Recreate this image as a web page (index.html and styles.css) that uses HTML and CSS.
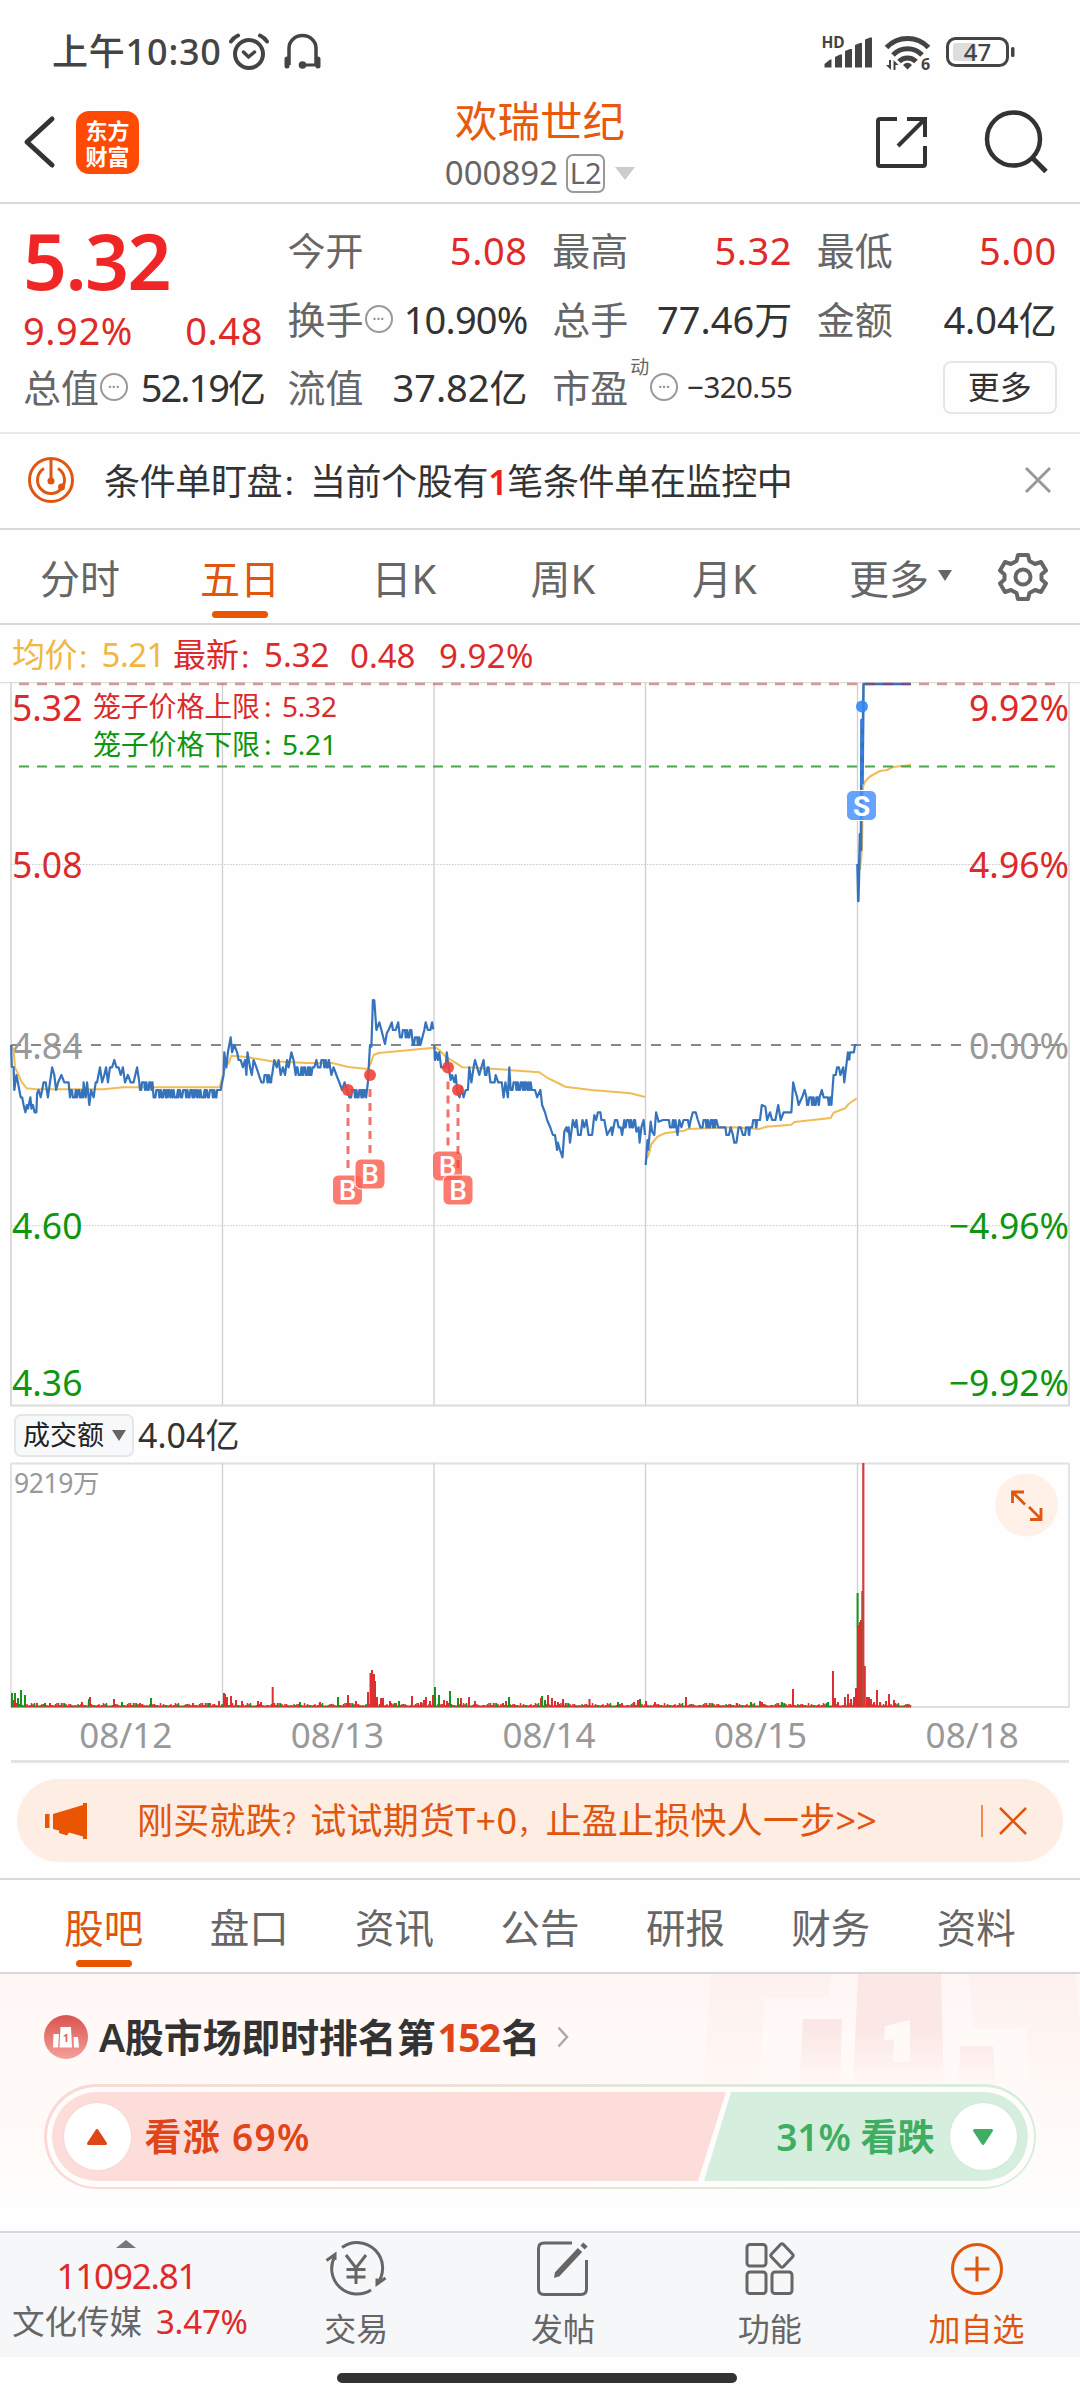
FILE: index.html
```html
<!DOCTYPE html>
<html lang="zh-CN">
<head>
<meta charset="utf-8">
<title>欢瑞世纪 000892</title>
<link rel="stylesheet" href="styles.css">
</head>
<body>
<div class="status">
  <div class="status-left">
    <span class="clock">上午10:30</span>
    <svg width="40" height="38" viewBox="0 0 40 38" fill="none" stroke="#444" stroke-linecap="round"><circle cx="20" cy="21" r="14" stroke-width="4"/><path d="M14.500 19l5 5 6-5" stroke-width="3.500"/><path d="M2 8.500Q4.500 4.500 9 2.500M31 2.500Q35.500 4.500 38 8.500" stroke-width="4"/></svg>
    <svg class="phones" width="40" height="38" viewBox="0 0 40 38" fill="none" stroke="#444"><path d="M6 32V15a13.500 12.500 0 0 1 27 0V32" stroke-width="3.500"/><path d="M4 26v7M35 26v7" stroke-width="5" stroke-linecap="round"/><path d="M19 32H33" stroke-width="3"/><circle cx="19.500" cy="32" r="3.800" fill="#444" stroke="none"/></svg>
  </div>
  <svg class="status-right" width="196" height="58" viewBox="820 23 196 58" fill="#444">
    <text x="821.500" y="48" font-size="15.500" font-weight="700">HD</text>
    <path d="M824.500 64l5.500-4.500h1.500V67.500h-7zM835 57l5-2.500h2V67.500h-7zM845 51l5-2h2V67.500h-7zM855 45l5-2h2V67.500h-7zM865 39.500l5-2h2V67.500h-7z"/>
    <g fill="none" stroke="#444" stroke-width="5"><path d="M886.500 47.500a29 29 0 0 1 42 0"/><path d="M893 55a20 20 0 0 1 29 0"/><path d="M899 61.500a12 12 0 0 1 17 0"/></g>
    <path d="M903 65q4.500-4.500 9 0l-4.500 4.500zM891 60v10l-5-5h3v-5zM893.500 70V60l5 5h-3v5z"/>
    <text x="921" y="70" font-size="16" font-weight="700">6</text>
    <rect x="953" y="43" width="23" height="18" rx="3" fill="#dedede"/>
    <rect x="947.500" y="38.500" width="60" height="27" rx="8" fill="none" stroke="#444" stroke-width="3"/>
    <rect x="1011" y="47" width="3.500" height="10" rx="1.500"/>
    <text x="977.500" y="61" font-size="24" text-anchor="middle" font-weight="500">47</text>
  </svg>
</div>

<header class="top">
  <div class="top-side">
    <svg width="34" height="54" viewBox="0 0 34 54" fill="none" stroke="#333" stroke-width="5" stroke-linecap="round" stroke-linejoin="round"><path d="M29 4L4 27l25 23"/></svg>
    <div class="logo"><span>东方</span><span>财富</span></div>
  </div>
  <div class="top-title">
    <h1>欢瑞世纪</h1>
    <div class="code"><span>000892</span><span class="lv">L2</span><i class="tri"></i></div>
  </div>
  <div class="top-side right">
    <svg width="54" height="54" viewBox="0 0 54 54" fill="none" stroke="#333" stroke-width="4"><path d="M23 4H6q-2 0-2 2V49q0 2 2 2H49q2 0 2-2V31"/><path d="M33 4H51V22M51 4L24 31"/></svg>
    <svg width="66" height="66" viewBox="0 0 66 66" fill="none" stroke="#333" stroke-width="4.500"><circle cx="30.500" cy="30" r="26.500"/><path d="M49.500 49L63 62.500" stroke-width="5"/></svg>
  </div>
</header>

<section class="quote">
  <div class="price"><b>5.32</b><div class="chg"><span>9.92%</span><span>0.48</span></div></div>
  <div class="cell"><label>今开</label><em class="up">5.08</em></div>
  <div class="cell"><label>最高</label><em class="up">5.32</em></div>
  <div class="cell"><label>最低</label><em class="up">5.00</em></div>
  <div class="cell"><label>换手<i class="more-dot">•••</i></label><em class="tight">10.90%</em></div>
  <div class="cell"><label>总手</label><em>77.46万</em></div>
  <div class="cell"><label>金额</label><em>4.04亿</em></div>
  <div class="cell"><label>总值<i class="more-dot">•••</i></label><em class="cap">52.19亿</em></div>
  <div class="cell"><label>流值</label><em>37.82亿</em></div>
  <div class="cell"><label>市盈<sup>动</sup><i class="more-dot">•••</i></label><em class="small">−320.55</em></div>
  <div class="cell end"><span class="btn">更多</span></div>
</section>

<section class="alert">
  <svg width="48" height="48" viewBox="0 0 48 48" fill="none" stroke="#e0560f" stroke-width="3"><circle cx="24" cy="24" r="21.500"/><path d="M17 12.500a13.500 13.500 0 1 0 14 0"/><path d="M24 3V24"/><circle cx="24" cy="25" r="3.500" fill="#e0560f" stroke="none"/><circle cx="34.500" cy="31" r="3.500" fill="#e0560f" stroke="none"/></svg>
  <p>条件单盯盘<span class="pn">：</span>当前个股有<b>1</b>笔条件单在监控中</p>
  <svg width="28" height="28" viewBox="0 0 28 28" stroke="#999" stroke-width="3"><path d="M2 2L26 26M26 2L2 26"/></svg>
</section>

<nav class="periods">
  <span>分时</span><span class="on">五日</span><span>日K</span><span>周K</span><span>月K</span><span>更多<i class="tri dark"></i></span>
  <svg width="50" height="50" viewBox="0 0 50 50" fill="none" stroke="#666" stroke-width="4" stroke-linejoin="round"><path d="M20 3h10l1.500 6 5.500 3 6-2 5 8.500-4.500 4v5l4.500 4-5 8.500-6-2-5.500 3L30 47H20l-1.500-6-5.500-3-6 2-5-8.500 4.500-4v-5l-4.500-4L7 10l6 2 5.500-3z"/><circle cx="25" cy="25" r="7.500"/></svg>
</nav>

<div class="legend">
  <span class="avg">均价<span class="pn">：</span>5.21</span><span class="last">最新<span class="pn">：</span>5.32</span><span class="last l2">0.48</span><span class="last l3">9.92%</span>
</div>

<svg class="chart" width="1080" height="725" viewBox="0 682 1080 725">
  <g stroke="#dcdcdc" stroke-width="2" fill="none">
    <path d="M0 682.500H1080" stroke-width="1.500"/>
    <path d="M11 683V1405M1069 683V1405"/>
    <path d="M222.500 683V1405M434 683V1405M645.500 683V1405M857.500 683V1405" stroke="#cfcfcf" stroke-width="1.300"/>
    <path d="M11 864.500H1069M11 1225.700H1069" stroke="#c8c8c8" stroke-width="1" stroke-dasharray="1.500 1.500"/>
    <path d="M10 1405.500H1070"/>
  </g>
  <path d="M11 1045H1069" stroke="#888" stroke-width="2" stroke-dasharray="10 10"/>
  <g class="axis">
    <text x="12" y="721" class="up">5.32</text><text x="12" y="878" class="up">5.08</text><text x="12" y="1059" class="flat">4.84</text><text x="12" y="1239" class="down">4.60</text><text x="12" y="1396" class="down">4.36</text>
    <text x="1069" y="721" class="up r">9.92%</text><text x="1069" y="878" class="up r">4.96%</text><text x="1069" y="1059" class="flat r">0.00%</text><text x="1069" y="1239" class="down r">−4.96%</text><text x="1069" y="1396" class="down r">−9.92%</text>
  </g>
  <g class="cage"><text x="93" y="717" class="up">笼子价格上限<tspan x="264">:</tspan><tspan x="282">5.32</tspan></text><text x="93" y="755" class="down">笼子价格下限<tspan x="264">:</tspan><tspan x="282">5.21</tspan></text></g>
  <g id="lines" fill="none" stroke-linejoin="round"></g>
  <path d="M19 684H1055" stroke="#c0303a" stroke-opacity=".5" stroke-width="2.500" stroke-dasharray="10 8"/>
  <path d="M19 766.500H1055" stroke="#4aa64a" stroke-width="2" stroke-dasharray="10 8"/>
  <g id="marks"></g>
</svg>

<div class="vol-bar"><span class="chip">成交额<i class="tri dark"></i></span><span>4.04亿</span></div>
<div class="volume">
  <svg width="1080" height="247" viewBox="0 1462 1080 247">
    <path d="M11 1463.500H1069V1707H11z" fill="none" stroke="#e0e0e0" stroke-width="1.800"/>
    <path d="M222.500 1463V1707M434 1463V1707M645.500 1463V1707M857.500 1463V1707" stroke="#cfcfcf" stroke-width="1.300"/>
    <text x="14" y="1492.500" class="vmax">9219万</text>
    <g id="bars"></g>
    <circle cx="1026.500" cy="1505" r="31.500" fill="#fff0e8"/>
    <path d="M1012.500 1503V1492H1024M1013 1492.500L1025 1504.500M1030 1519.500H1041V1508M1041 1519L1029 1507" fill="none" stroke="#e0560f" stroke-width="2.800"/>
  </svg>
</div>
<div class="dates"><span>08/12</span><span>08/13</span><span>08/14</span><span>08/15</span><span>08/18</span></div>

<div class="promo">
  <svg width="42" height="38" viewBox="0 0 42 38" fill="#ea5504"><path d="M0 12h4.500v14H0zM8 12L38 3V1h4v36h-4v-2.500l-14-4-2 3-8-2.500V28.500L8 27z"/></svg>
  <p>刚买就跌<span class="pn">？</span>试试期货T+0<span class="pn">，</span>止盈止损快人一步&gt;&gt;</p>
  <i class="bar"></i>
  <svg width="30" height="30" viewBox="0 0 30 30" stroke="#e0560f" stroke-width="2.500"><path d="M2 2L28 28M28 2L2 28"/></svg>
</div>

<nav class="tabs"><span class="on">股吧</span><span>盘口</span><span>资讯</span><span>公告</span><span>研报</span><span>财务</span><span>资料</span></nav>

<section class="rank">
  <svg class="podium" width="400" height="112" viewBox="0 0 400 112">
    <defs>
      <linearGradient id="pa" x1="0" y1="0" x2="0" y2="1"><stop offset="0" stop-color="#fdf1f0"/><stop offset="1" stop-color="#fff8f5"/></linearGradient>
      <linearGradient id="pb" gradientUnits="userSpaceOnUse" x1="0" y1="0" x2="0" y2="112"><stop offset="0" stop-color="#fbe7e5"/><stop offset=".5" stop-color="#fbe8e6"/><stop offset="1" stop-color="#fff8f5"/></linearGradient>
    </defs>
    <path d="M31 0H151L149 24H85L79 112H23zM289 0H396L400 50V112H351L346 55H293z" fill="url(#pa)"/>
    <path d="M178 0H261L264 112H173zM123 45H162L160 112H119zM280 72H313L316 112H279z" fill="url(#pb)"/>
    <path d="M205 52L230 46V88H213L214 65L204 67z" fill="#fffaf8"/>
  </svg>
  <div class="rank-title">
    <svg width="44" height="44" viewBox="0 0 44 44"><defs><linearGradient id="rg" x1="0" y1="0" x2="0" y2="1"><stop offset="0" stop-color="#d9534f"/><stop offset="1" stop-color="#f5a09a"/></linearGradient></defs><circle cx="22" cy="22" r="22" fill="url(#rg)"/><path d="M9.500 19H15l-1 13.500H9zM16.500 12H27l1 20.500H15.500zM29.500 22H34l1 10.500H30z" fill="#fff"/><text x="21.800" y="27" font-size="11" font-weight="700" fill="#e06a66" text-anchor="middle">1</text></svg>
    <h2>A股市场即时排名第<b>152</b>名</h2>
    <svg width="12" height="22" viewBox="0 0 12 22" fill="none" stroke="#aaa" stroke-width="2.500"><path d="M1.500 1.500L10 11l-8.500 9.500"/></svg>
  </div>
  <div class="vote">
    <div class="vote-in">
      <svg class="vote-bg" width="976" height="89" viewBox="0 0 976 89"><path d="M44.500 0H674L646 89H44.500A44.500 44.500 0 0 1 44.500 0z" fill="#fdddd9"/><path d="M679 0H931.500A44.500 44.500 0 0 1 931.500 89H652z" fill="#d6eedd"/></svg>
      <span class="knob"><svg width="22" height="18" viewBox="0 0 22 18"><path d="M11 2.500L19.500 15.500H2.500z" fill="#e0451a" stroke="#e0451a" stroke-width="3" stroke-linejoin="round"/></svg></span>
      <span class="bull">看涨 69%</span>
      <span class="bear">31% 看跌</span>
      <span class="knob"><svg width="22" height="18" viewBox="0 0 22 18"><path d="M11 15.500L19.500 2.500H2.500z" fill="#3fae63" stroke="#3fae63" stroke-width="3" stroke-linejoin="round"/></svg></span>
    </div>
  </div>
</section>

<footer class="dock">
  <div class="index"><i class="tri up-tri"></i><strong>11092.81</strong><div><span>文化传媒</span><em>3.47%</em></div></div>
  <div class="item"><svg width="62" height="58" viewBox="0 0 62 58" fill="none" stroke="#666" stroke-width="3"><path d="M17 7.500A25.500 25.500 0 0 1 52 44M46 50A25.500 25.500 0 0 1 10 16"/><path d="M1.500 20.500L10 14.500V20M60.500 38L52 44V38.500" /><path d="M21 15l10 13 10-13M31 28V44M21.500 29.500H40.500M21.500 37H40.500"/></svg><span>交易</span></div>
  <div class="item"><svg width="62" height="58" viewBox="0 0 62 58" fill="none" stroke="#666" stroke-width="3"><path d="M40 3H12q-5.500 0-5.500 5.500V49q0 5.500 5.500 5.500H49q5.500 0 5.500-5.500V20"/><path d="M25 34.500L48 10M50.500 7.500L53.500 4.500" stroke-width="6"/><path d="M22 38l1-6 5 4z" fill="#666" stroke="none"/></svg><span>发帖</span></div>
  <div class="item"><svg width="62" height="58" viewBox="0 0 62 58" fill="none" stroke="#666" stroke-width="3" stroke-linejoin="round"><rect x="8" y="4.500" width="19" height="21.500" rx="3"/><rect x="8" y="32" width="19" height="21.500" rx="3"/><rect x="33" y="32" width="20" height="21.500" rx="3"/><path d="M41.500 4.500q1.500-1.500 3 0l9 9.500q1.500 1.500 0 3l-9 9.500q-1.500 1.500-3 0l-9-9.500q-1.500-1.500 0-3z"/></svg><span>功能</span></div>
  <div class="item hot"><svg width="62" height="58" viewBox="0 0 62 58" fill="none" stroke="#e0560f" stroke-width="3"><circle cx="31" cy="29" r="24.500"/><path d="M31 16.500V41.500M18.500 29H43.500"/></svg><span>加自选</span></div>
</footer>
<div class="home"><i></i></div>
<script src="chart.js"></script>
</body>
</html>
```
FILE: styles.css
```css
* { box-sizing: border-box; margin: 0; padding: 0; }
body {
  width: 1080px; height: 2400px; overflow: hidden; background: #fefefe; color: #333;
  font-family: "Noto Sans", "Noto Sans CJK SC", sans-serif;
  display: flex; flex-direction: column;
}
svg { display: block; flex: none; }
i, em { font-style: normal; }
span, em, label, p { white-space: nowrap; }
.up { color: #e02a2a; fill: #dc2a2a; }
.down { fill: #0f960f; }
.flat { fill: #999; }
.pn { font-size: 28px; }
.tri { display: inline-block; flex: none; border: 10px solid transparent; border-top: 13px solid #ccc; border-bottom: 0; }
.tri.dark { border-width: 11px 7px 0; border-top-color: #666; }

.status { height: 96px; padding: 7px 64px 0 52px; display: flex; justify-content: space-between; align-items: center; }
.status-left { display: flex; align-items: center; }
.clock { font-size: 36px; line-height: 40px; font-weight: 500; color: #444; width: 177px; letter-spacing: .8px; }
.phones { margin-left: 14px; }
.status-right { font-family: "Noto Sans", sans-serif; }

.top { height: 108px; border-bottom: 2px solid #d8d8d8; display: flex; justify-content: space-between; align-items: flex-start; }
.top-side { width: 300px; height: 92px; display: flex; align-items: center; padding-left: 23px; gap: 19px; }
.top-side.right { justify-content: flex-end; padding: 0 31px 0 0; gap: 55px; }
.logo { width: 63px; height: 63px; border-radius: 13px; background: #ff4a05; color: #fff; display: flex; flex-direction: column; align-items: center; justify-content: center; font: 700 22px/26px "Noto Sans CJK SC", sans-serif; }
.top-title { display: flex; flex-direction: column; align-items: center; }
h1 { font-size: 42.500px; line-height: 50px; font-weight: 400; color: #e8590c; }
.code { display: flex; align-items: center; margin-top: 5px; font-size: 33px; line-height: 44px; color: #666; }
.lv { margin: 0 10px 0 8px; width: 39px; height: 39px; border: 2px solid #999; border-radius: 7px; font-size: 29px; line-height: 34px; text-align: center; }

.quote { height: 230px; border-bottom: 2px solid #e8e8e8; padding: 12px 23px 0; display: grid; grid-template-columns: repeat(4, 240px); grid-template-rows: repeat(3, 68.500px); column-gap: 24.600px; }
.price { grid-row: span 2; color: #f02525; display: flex; flex-direction: column; padding-top: 3px; }
.price b { font-size: 77px; font-weight: 600; line-height: 84px; letter-spacing: -1.600px; }
.chg { display: flex; justify-content: space-between; font-size: 38px; line-height: 54px; color: #e02a2a; letter-spacing: .6px; }
.cell { display: flex; align-items: center; justify-content: space-between; font-size: 38px; line-height: 50px; }
.cell.end { justify-content: flex-end; }
.cell label { color: #666; display: flex; align-items: center; }
.cell em.up { letter-spacing: .6px; }
.cell em.tight { letter-spacing: -.8px; }
.cell em.cap { letter-spacing: -2px; margin-right: -1px; }
.cell em.small { font-size: 29.500px; letter-spacing: -.6px; }
.more-dot { width: 28px; height: 28px; border: 2px solid #999; border-radius: 50%; font-size: 9px; line-height: 23px; text-align: center; color: #888; letter-spacing: .5px; margin-left: 1px; }
sup { font-size: 19px; line-height: 20px; align-self: flex-start; margin: -5px 0 0 2px; }
.btn { width: 114px; height: 53px; border: 2px solid #e6e6e6; border-radius: 8px; text-align: center; font-size: 32px; line-height: 48px; color: #333; }

.alert { height: 96px; border-bottom: 2px solid #d8d8d8; display: flex; align-items: center; padding: 0 28px 2px 27px; }
.alert p { margin-left: 29px; flex: 1; font-size: 36px; line-height: 50px; padding-top: 5px; letter-spacing: -.35px; }
.alert p b { color: #f02020; font-weight: 600; font-size: 34px; }

.periods { height: 95px; border-bottom: 2px solid #d8d8d8; display: flex; align-items: center; font-size: 40px; line-height: 60px; color: #666; }
.periods span { flex: none; width: 160px; height: 93px; display: flex; align-items: center; justify-content: center; position: relative; padding-top: 4px; }
.periods span:nth-child(3) { width: 168px; }
.periods span:nth-child(4) { width: 150px; }
.periods span:nth-child(5) { width: 173px; }
.periods span:nth-child(6) { width: 173px; padding-left: 6px; }
.periods span:nth-child(6) .tri { margin: 0 0 6px 9px; }
.periods svg { margin-left: 14px; }
.on { color: #e0560f; }
.on::after { content: ""; position: absolute; left: 50%; bottom: 5px; width: 56px; height: 7px; margin-left: -28px; border-radius: 4px; background: #ea5504; }

.legend { height: 57px; display: flex; align-items: center; padding: 4px 0 0 12px; font-size: 33px; line-height: 50px; }
.legend .avg { color: #f0b840; width: 161px; letter-spacing: -.5px; }
.legend .pn { font-size: 25px; }
.last { color: #dc2a2a; width: 177px; }
.l2 { width: 89px; }
.l3 { letter-spacing: .4px; }
.chart { height: 725px; }
.axis { font-size: 35.500px; }
.cage { font-size: 28px; letter-spacing: -.2px; }
.r { text-anchor: end; }

.vol-bar { height: 55px; display: flex; align-items: center; gap: 4px; padding: 1px 0 0 14px; font-size: 34px; line-height: 50px; }
.chip { width: 120px; height: 43px; background: #f7f8fa; border: 2px solid #e6e6e6; border-radius: 7px; display: flex; align-items: center; justify-content: space-between; padding: 0 6px 0 7px; font-size: 27px; line-height: 38px; color: #222; }
.volume { height: 247px; }
.vmax { font-size: 26.500px; fill: #999; letter-spacing: -.4px; }
.dates { margin: 0 11px; height: 54px; border-bottom: 3px solid #e4e4e4; display: flex; font-size: 35px; line-height: 52px; color: #999; }
.dates span { flex: 1; text-align: center; padding-left: 18px; }

.promo { margin: 16px 17px 16px; height: 83px; border-radius: 42px; background: #fdede3; color: #e0560f; display: flex; align-items: center; padding: 0 35px 0 28px; }
.promo p { flex: 1; margin-left: 50px; font-size: 36px; line-height: 50px; letter-spacing: .25px; padding-top: 3px; }
.bar { width: 2px; height: 32px; background: #ec8a55; margin-right: 15px; }

.tabs { height: 96px; border-top: 2px solid #d8d8d8; border-bottom: 2px solid #d8d8d8; padding: 0 31px; display: flex; font-size: 39.500px; line-height: 96px; color: #666; }
.tabs span { flex: 1; height: 92px; text-align: center; position: relative; }
.tabs .on::after { bottom: 5px; }

.rank { height: 257px; position: relative; background: linear-gradient(#fff6f5, #fffaf8 30%, #fffaf7 60%, #fefefe 90%); padding: 36px 44px 0; }
.podium { position: absolute; left: 680px; top: 0; }
.rank-title { position: relative; display: flex; align-items: center; height: 54px; }
h2 { font-size: 38.800px; line-height: 54px; font-weight: 600; margin: 0 17px 0 11px; color: #333; }
h2 b { color: #e0451a; font-weight: 700; letter-spacing: -1.500px; margin: 0 2px; }
.vote { position: relative; margin-top: 20px; height: 105px; border-radius: 53px; padding: 2.500px; background: linear-gradient(90deg, #fbd9d5, #d6eedd); }
.vote-in { height: 100px; border-radius: 50px; background: #fffdfc; display: flex; align-items: center; position: relative; padding: 0 17px; font-size: 37px; font-weight: 600; line-height: 50px; }
.vote-bg { position: absolute; left: 5.500px; top: 5.500px; }
.knob { position: relative; width: 67px; height: 67px; border-radius: 50%; background: #fff; display: flex; align-items: center; justify-content: center; box-shadow: 0 0 3px rgba(0, 0, 0, .05); }
.bull, .bear { position: relative; flex: 1; color: #e0451a; padding: 0 15px 0 14px; }
.bull { letter-spacing: 1.300px; }
.bear { text-align: right; color: #3fae63; }

.dock { height: 126px; border-top: 2px solid #d5d9dd; background: #f6f7f9; display: flex; color: #666; }
.index { width: 253px; display: flex; flex-direction: column; align-items: center; padding-top: 7px; }
.up-tri { border-width: 0 10px 8px; border-bottom: 8px solid #777; border-top: 0; }
.index strong { font-weight: 400; font-size: 35px; line-height: 44px; margin-top: 6px; color: #e02a2a; letter-spacing: -1.200px; }
.index div { display: flex; gap: 14px; font-size: 32.500px; line-height: 48px; padding-left: 7px; }
.index em { color: #e02a2a; font-size: 33px; letter-spacing: -.2px; }
.item { width: 207px; display: flex; flex-direction: column; align-items: center; padding-top: 7px; font-size: 32px; line-height: 46px; }
.item span { margin-top: 8px; }
.hot { color: #e0560f; }
.home { flex: 1; display: flex; justify-content: center; padding-top: 16px; }
.home i { width: 400px; height: 10px; border-radius: 5px; background: #333; margin-right: 7px; }
```
FILE: chart.js
```js
// Price samples use a fine plotting grid: 2.8 units per px across, 3 per px down, origin (0, 960).
const osc = (x0, x1, a, b) => {
  const out = [];
  let n = 7;
  for (let x = x0; x < x1; x += 3) {
    n = (n * 37 + 11) % 101;
    out.push(x, n % 2 ? a : b);
    if (n % 3 === 0) out.push(x + 2, n % 2 ? b : a);
  }
  return out;
};
const shift = (pts) => pts.map((v, i) => (i % 2 ? v : v + 1456));
const price = [
  [31,255,33,320,38,322,40,390,46,345,50,367,54,390,58,412,62,412,66,435,71,457,75,435,78,446,85,412,88,446,92,435,97,457,102,457,104,400,108,390,114,412,122,367,128,367,134,412,140,367,146,322,152,345,157,390,163,367,172,345,180,367,192,367,196,412,...osc(198,232,412,390),234,367,240,412,244,367,250,435,255,390,262,412,268,367,272,367,280,322,286,367,292,345,297,322,302,367,308,322,314,322,320,300,326,322,332,322,338,345,344,322,350,367,358,345,366,367,374,367,384,322,390,367,...osc(392,426,367,390),430,412,...osc(432,612,390,412),618,390,622,367,
   626,345,628,277,634,322,638,277,646,232,650,277,656,255,664,277,668,300,674,300,680,322,686,300,690,345,693,277,700,322,705,345,710,300,718,322,725,345,732,367,...osc(735,764,345,367),768,300,775,322,780,300,786,345,792,322,798,345,804,300,808,322,816,277,822,300,828,345,...osc(830,876,345,322),880,322,886,300,890,322,...osc(894,922,300,322),928,345,934,322,942,345,950,367,958,390,965,367,972,390,978,412,...osc(980,1027,390,412),1030,367,1036,255,1040,260,1044,120,1048,121,1054,210,1062,187,1068,210,1073,232,1078,252,1083,220,1088,210,1097,187,1100,210,1108,210,1115,187,1120,232,...osc(1122,1155,210,232),...osc(1156,1180,232,255),1188,210,1192,187,1198,210,1205,210,1210,187,1213,208],
  [1216,255,1218,300,1222,277,1226,300,1230,277,1235,322,1248,322,1251,277,1256,322,1262,360,1266,345,1272,367,1276,345,1281,400,1287,412,1292,380,1298,412,1304,390,1310,390,1314,322,1320,367,1326,322,1330,300,1336,322,1342,345,1348,322,1354,300,1358,345,...osc(1359,1370,322,345),1373,367,1385,367,1388,345,1395,367,1405,367,1410,412,1415,367,1422,412,1426,322,1430,390,...osc(1432,1490,367,390),1498,390,1504,412,1513,390,1518,435,1526,457,1532,480,1540,500,1548,525,1554,525,1560,570,
   ...shift([106,548,112,570,119,592,124,515,130,502,133,515,136,502,140,548,148,480,154,502,158,480,163,525,170,525,175,480,180,502,186,480,192,525,202,525,208,465,213,480,218,457,225,457,228,480,236,480,244,525,256,502,258,525,266,480,272,480,276,502,282,502,286,525,292,480,...osc(293,320,480,502),322,480,326,515,332,502,335,548,340,502,346,480,350,525])],
  shift([352,615,357,540,359,570,366,485,370,515,376,525,381,457,388,485,400,480,412,480,...osc(414,438,502,480),441,525,446,480,452,502,458,480,470,480,474,502,478,480,484,457,492,457,498,480,505,502,...osc(508,552,480,502),555,502,575,502,578,525,585,525,590,502,596,525,600,548,606,548,612,502,618,502,624,525,...osc(627,646,502,525),...osc(647,665,480,502),672,480,677,435,687,440,692,480,700,457,706,480,715,480,723,435,730,480,738,457,760,457,765,367,770,390,776,412,780,435,790,412,797,390,802,412,...osc(804,840,412,435),845,390,850,412,862,412,865,435,868,412,872,435,878,345,884,345,888,322,893,322,897,345,905,322,908,367,913,322,918,277,922,299,924,277,935,277,938,255,943,255]),
];
const average = [
  [31,255,38,270,42,322,52,345,60,365,75,385,100,388,290,388,345,382,615,382,624,345,634,315,640,310,648,287,690,291,760,304,860,309,930,309,975,321,1030,327,1038,310,1046,285,1060,279,1200,265,1220,263,1230,270,1250,292,1275,308,1295,322,1330,323,1400,328,1510,337,1530,352,1568,372,1582,380,1656,390,1766,400,1806,411],
  shift([352,600,360,585,368,552,385,530,405,520,460,512,470,507,600,502,670,507,690,500,760,494,768,486,870,474,878,458,910,445,920,432,943,415]),
];
const toPath = (pts) => {
  let d = '';
  for (let i = 0; i < pts.length; i += 2) d += (i ? 'L' : 'M') + (pts[i] / 2.8).toFixed(1) + ' ' + (960 + pts[i + 1] / 3).toFixed(1);
  return d;
};
const line = (d, c, w) => `<path d="${d}" stroke="${c}" stroke-width="${w}"/>`;
document.getElementById('lines').innerHTML =
  average.map((p) => line(toPath(p), '#f0bc55', 2)).join('') +
  line('M860 870L862 850L863 787L865 781.500L870 776.500L880 771L887 770L893 767L911 765', '#f0bc55', 2) +
  price.map((p) => line(toPath(p), '#3673bd', 2.2)).join('') +
  line('M857.500 864L858.300 901L860 834L861 850L861.500 720L862.500 783L863.500 684H911', '#3673bd', 2.6);

const mark = (x, dotY, badgeX, badgeY, ch, fill, stroke) =>
  `<path d="M${x} ${dotY + 14}V${badgeY - 20}" stroke="${stroke}" stroke-opacity=".75" stroke-width="3" stroke-dasharray="8 6"/>` +
  `<circle cx="${x}" cy="${dotY}" r="6" fill="${stroke}" fill-opacity=".9"/>` +
  `<rect x="${badgeX - 15}" y="${badgeY - 15}" width="30" height="30" rx="6" fill="${fill}" fill-opacity=".85" stroke="#fff" stroke-width="1"/>` +
  `<text x="${badgeX}" y="${badgeY + 10}" font-family="Roboto" font-size="28" font-weight="${ch === 'S' ? 700 : 500}" fill="#fff" text-anchor="middle">${ch}</text>`;
document.getElementById('marks').innerHTML =
  mark(348, 1090, 347.5, 1190, 'B', '#fb6456', '#ee4438') +
  mark(370, 1075, 370, 1174, 'B', '#fb6456', '#ee4438') +
  mark(448, 1067.5, 447.5, 1166, 'B', '#fb6456', '#ee4438') +
  mark(458, 1090, 458, 1190, 'B', '#fb6456', '#ee4438') +
  mark(862, 706.5, 861.5, 805.5, 'S', '#4a93fb', '#3385f5');

// Turnover bars: x and height in px above the 1707 baseline.
const green = [12,13,15,13,18,8,21,16,25,11,45,3,89,7,122,4,151,8,224,13,300,4,338,9,375,25,399,5,435,19,439,11,450,15,458,8,509,9,542,10,545,6,618,4,640,7,751,4,782,4,828,4,857.6,113,862.3,115];
const red = [14,6,37,3,50,3,82,4,90,9,114,7,140,3,193,3,210,3,219,5,225,12,227,9,231,10,236,6,242,5,258,5,261,4,272.7,19,320,4,348,11,356,5,368,14,370.5,33,372,36,374,32,377,9,381,8,383,8,390,5,396,3,412,10,421,4,424,6,426,9,430,5,433,11,444,6,447,5,461,8,469,9,475,5,503,3,506,5,541,8,548,11,552,8,555,5,558,4,563,7,589.5,7,622,3,634,4,638,6,646,5,655,4,686,9,737,3,760,5,762,4,793,17,833,35,835,8,838,4,845,9,848,12,851,7,854,9,856,18,859,81,860,84,861,86,864.8,40,867,9,869,9,871,7,874,4,877,16,880,4,886,5,889,12,894,6];
const bars = (a, c) => {
  let s = '';
  for (let i = 0; i < a.length; i += 2) s += `<path d="M${a[i]} 1707V${1706 - a[i + 1]}" stroke="${c}" stroke-width="2"/>`;
  return s;
};
let noise = '';
for (let x = 12, n = 5; x < 911; x += 1.5) {
  n = (n * 53 + 17) % 97;
  noise += `<path d="M${x} 1707v-${1 + (n % 7 === 0 ? 3 : n % 3)}" stroke="${n % 4 === 0 ? '#17921a' : '#dc2f2f'}" stroke-width="1.500"/>`;
}
document.getElementById('bars').innerHTML = '<path d="M11 1706.500H911" stroke="#a34a40" stroke-width="2"/>' + noise + bars(green, '#17921a') + bars(red, '#dc2f2f') +
  '<path d="M863.300 1707V1463" stroke="#d93a3a" stroke-width="2.200"/>';
```
